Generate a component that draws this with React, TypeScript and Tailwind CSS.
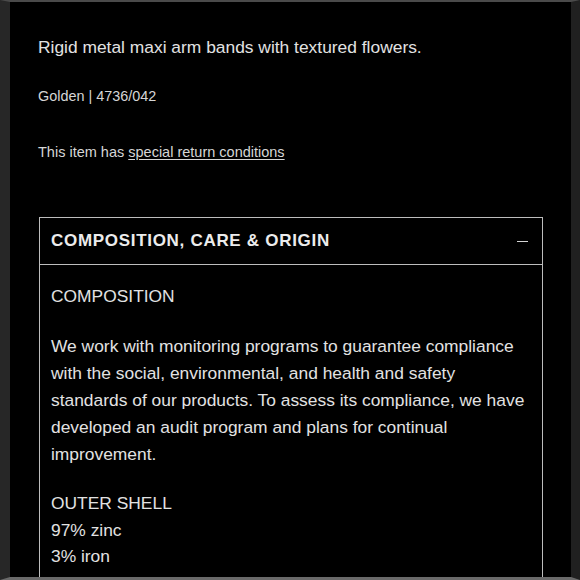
import React from 'react';

export default function App() {
  return (
    <div
      className="w-[580px] h-[580px] overflow-hidden bg-black border-l-[10px] border-l-[#272727] border-r-[9px] border-r-[#202020] border-t-2 border-t-[#4a4a4a] border-b-[3px] border-b-[#6a6a6a] text-[#e2e2e2]"
      style={{ fontFamily: '"Liberation Sans", Arial, sans-serif' }}
    >
      <div className="pl-[28px] pr-[28px] pt-[34px]">
        {/* Описание товара */}
        <p className="text-[17.4px] leading-[22px]">Rigid metal maxi arm bands with textured flowers.</p>
        <p className="mt-[29px] text-[14.4px] leading-[18px] text-[#d6d6d6]">Golden | 4736/042</p>
        <p className="mt-[38px] text-[14.5px] leading-[18px] text-[#d6d6d6]">
          This item has <span className="underline underline-offset-2">special return conditions</span>
        </p>

        {/* Аккордеон */}
        <div className="mt-[56px] ml-[1px] border border-[#bdbdbd] border-b-0">
          <div className="flex items-center justify-between h-[47px] pl-[11px] pr-[14px] border-b border-[#bdbdbd]">
            <span className="text-[17px] font-bold tracking-[0.7px] text-[#ececec]">COMPOSITION, CARE &amp; ORIGIN</span>
            <span className="block w-[11px] h-px bg-[#d4d4d4]" />
          </div>
          <div className="pl-[11px] pt-[20px] pb-[40px] text-[17.4px]">
            <p className="leading-[22px]">COMPOSITION</p>
            <p className="mt-[26px] w-[480px] leading-[27px]">
              We work with monitoring programs to guarantee compliance with the social, environmental, and health and safety standards of our products. To assess its compliance, we have developed an audit program and plans for continual improvement.
            </p>
            <div className="mt-[22px] leading-[26.5px]">
              <p>OUTER SHELL</p>
              <p>97% zinc</p>
              <p>3% iron</p>
            </div>
          </div>
        </div>
      </div>
    </div>
  );
}
